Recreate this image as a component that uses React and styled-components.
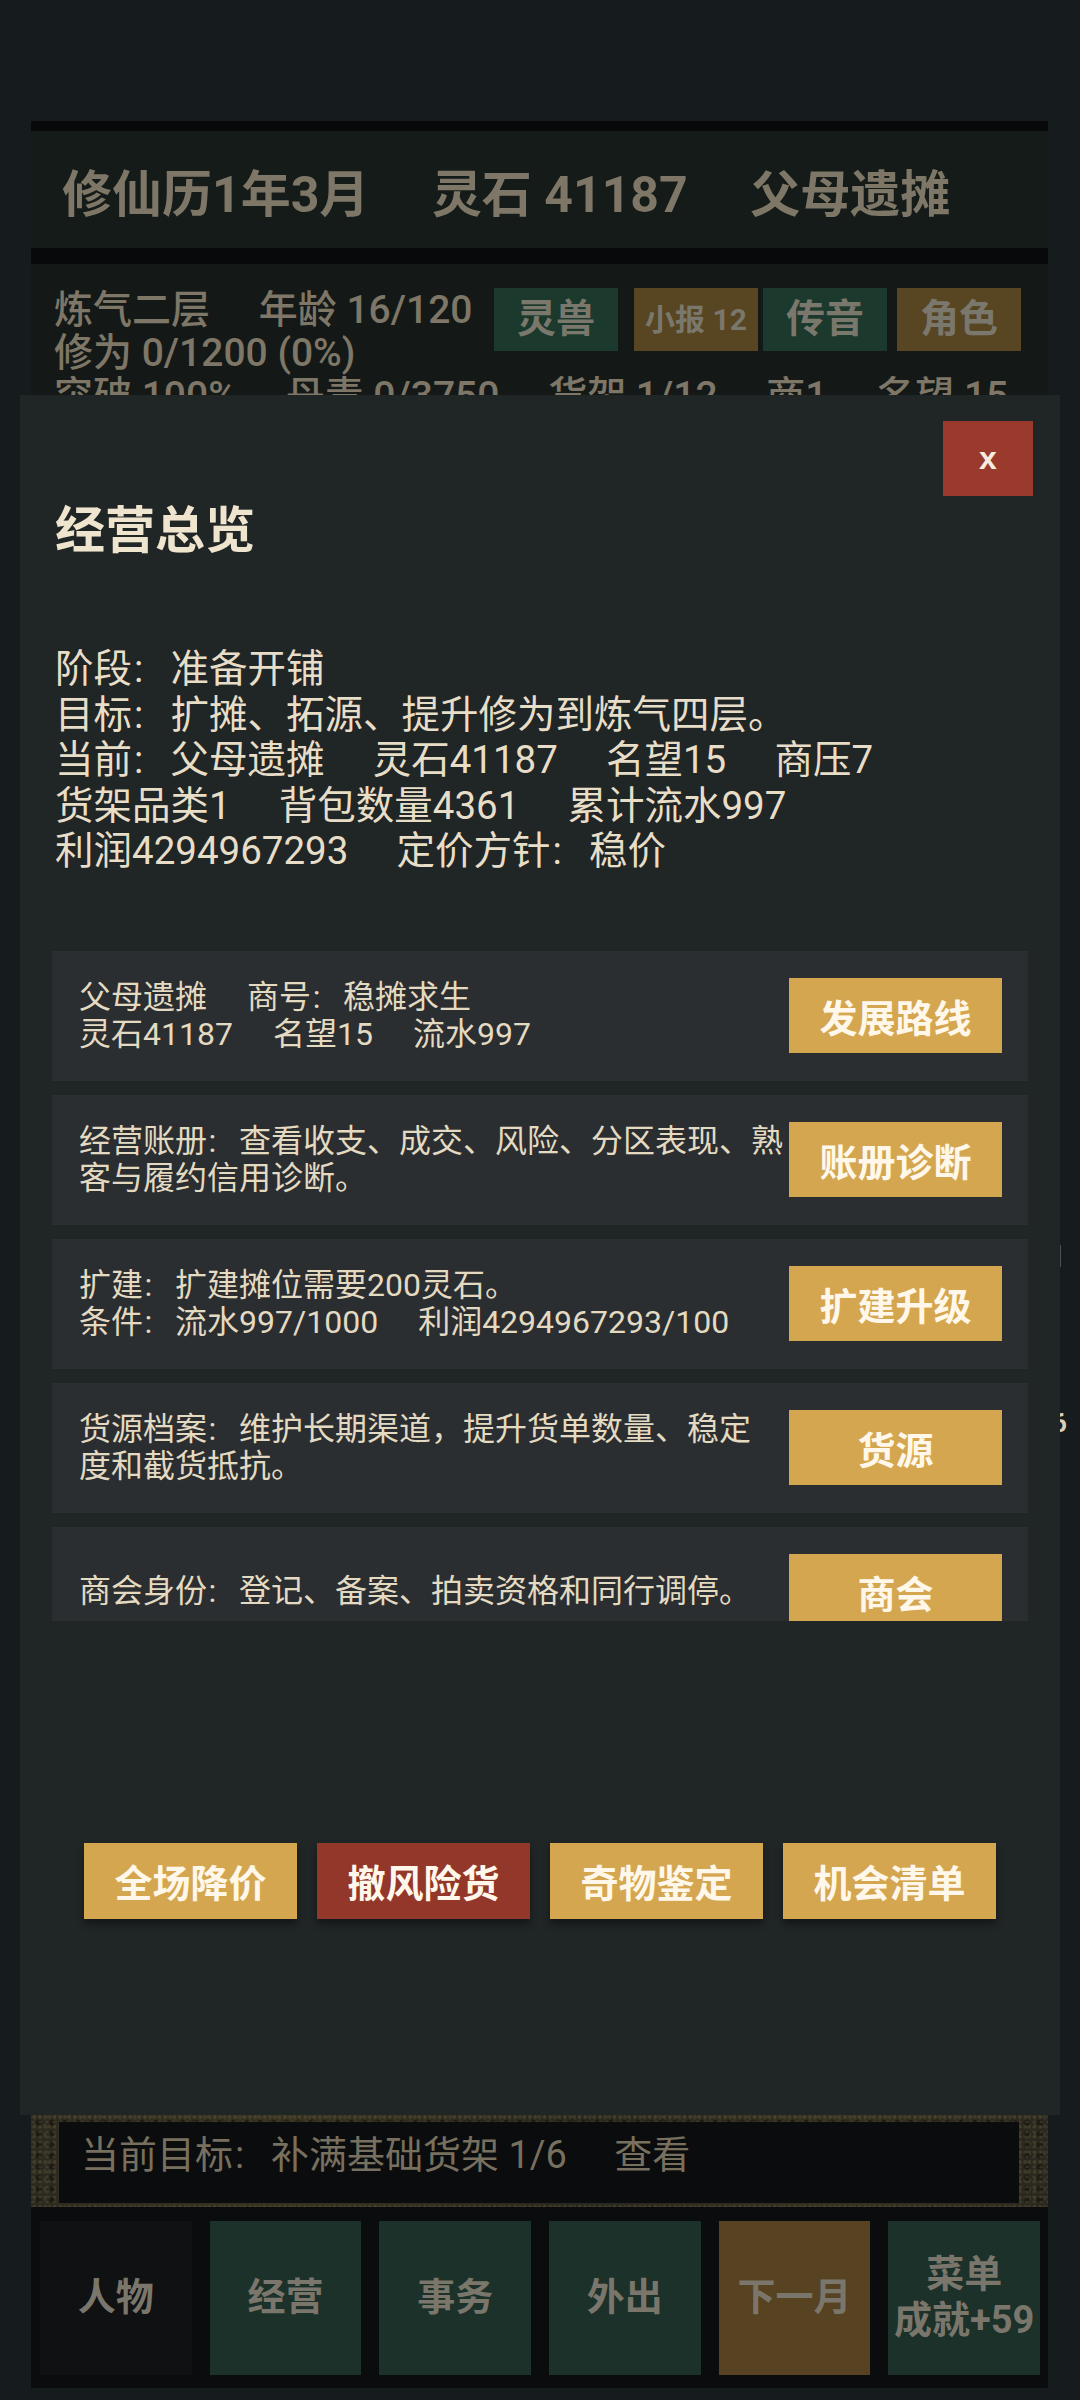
import React from "react";
import styled, { createGlobalStyle } from "styled-components";

const FONT = `Roboto, "Noto Sans CJK SC", "Noto Sans", sans-serif`;

const Global = createGlobalStyle`
  html, body { margin: 0; padding: 0; background: #161b1d; }
  body { font-family: ${FONT}; }
  * { box-sizing: border-box; }
`;

const Screen = styled.div`
  position: relative;
  width: 1080px;
  height: 2400px;
  overflow: hidden;
  background: #161b1d;
  display: flex;
  flex-direction: column;
  padding: 121px 32px 12px 31px;
`;

const BlackBar = styled.div`
  height: ${(p) => p.$h}px;
  background: #07090b;
  flex-shrink: 0;
`;

const Header = styled.div`
  height: 117px;
  flex-shrink: 0;
  background: #141b18;
  display: flex;
  align-items: center;
  padding-left: 31px;
  font-size: 50px;
  font-weight: 700;
  color: #7e7666;
  white-space: nowrap;
`;

const Sep = styled.span`
  display: inline-block;
  width: ${(p) => p.$w || "1.25em"};
`;

/* CJK-style colon: dots sit just after the previous glyph, full em advance */
const ColonMark = styled.span`
  display: inline-block;
  width: 1em;
  padding-left: 0.05em;
  text-align: left;
`;

const StatusPanel = styled.div`
  flex: 1;
  background: #141917;
  padding: 25px 27px 0 23px;
  color: #7e7666;
  font-size: 39px;
  font-weight: 500;
  line-height: 43px;
`;

const StatusRow = styled.div`
  display: flex;
  align-items: flex-start;
  justify-content: space-between;
`;

const StatLine = styled.div`
  white-space: nowrap;
`;

const Chips = styled.div`
  display: flex;
  margin-top: -1px;
`;

const Chip = styled.div`
  width: 124px;
  height: 63px;
  margin-left: ${(p) => p.$ml || 0}px;
  background: ${(p) => (p.$tone === "brown" ? "#584522" : "#1c392d")};
  color: #7a776c;
  display: flex;
  align-items: center;
  justify-content: center;
  font-size: ${(p) => p.$fs || 39}px;
  font-weight: 700;
  white-space: nowrap;
`;

const GoalFrame = styled.div`
  height: 92px;
  flex-shrink: 0;
  padding: 7px 29px 4px 28px;
  background-color: #2a281f;
  background-image:
    radial-gradient(ellipse at 30% 40%, rgba(78, 70, 48, 0.55) 0 1px, transparent 3px),
    radial-gradient(ellipse at 60% 70%, rgba(14, 13, 9, 0.6) 0 2px, transparent 4px),
    radial-gradient(ellipse at 80% 20%, rgba(95, 86, 60, 0.35) 0 1px, transparent 2px),
    linear-gradient(90deg, #2c2a20, #35311f 25%, #28271e 55%, #33301f 80%, #2a281f);
  background-size: 7px 5px, 13px 11px, 5px 9px, 100% 100%;
`;

const GoalBox = styled.div`
  height: 100%;
  background: #0a0c0d;
  padding: 11px 22px 0;
  font-size: 38px;
  line-height: 1.2;
  color: #77705f;
  white-space: nowrap;
`;

const Nav = styled.div`
  height: 181px;
  flex-shrink: 0;
  background: #0a0c0d;
  padding: 14px 8px 13px 9px;
  display: grid;
  grid-template-columns: repeat(6, 1fr);
  column-gap: 18px;
`;

const NavBtn = styled.div`
  background: ${(p) =>
    p.$tone === "dark" ? "#0f1112" : p.$tone === "brown" ? "#574321" : "#1b3129"};
  color: #7a766c;
  font-size: 38px;
  font-weight: 700;
  line-height: 1.2;
  display: flex;
  flex-direction: column;
  align-items: center;
  justify-content: center;
  text-align: center;
  white-space: nowrap;
`;

const PeekBadge = styled.div`
  position: absolute;
  left: 1052px;
  top: 1408px;
  font-size: 26px;
  font-weight: 700;
  color: #d8d0bb;
`;

const PeekTick = styled.div`
  position: absolute;
  left: 1059px;
  top: 1245px;
  width: 2px;
  height: 22px;
  background: #4a4f52;
`;

/* Modal */
const Modal = styled.div`
  position: absolute;
  left: 20px;
  top: 395px;
  width: 1040px;
  height: 1720px;
  background: #202526;
  display: flex;
  flex-direction: column;
  padding: 0 32px;
  z-index: 2;
`;

const CloseRow = styled.div`
  display: flex;
  justify-content: flex-end;
  padding-top: 26px;
  margin-right: -5px;
`;

const CloseBtn = styled.div`
  width: 90px;
  height: 75px;
  background: #9a3a2d;
  color: #f6ece0;
  font-family: "Liberation Sans", Roboto, sans-serif;
  font-size: 32px;
  font-weight: 700;
  display: flex;
  align-items: center;
  justify-content: center;
`;

const Title = styled.div`
  margin-top: 5px;
  padding-left: 3px;
  font-size: 50px;
  font-weight: 700;
  line-height: 1.2;
  color: #efe5cf;
`;

const Info = styled.div`
  margin-top: 85px;
  padding-left: 3px;
  font-size: 38.5px;
  line-height: 45.6px;
  color: #e8dec8;
`;

const InfoLine = styled.div`
  white-space: nowrap;
`;

const CardList = styled.div`
  margin-top: 77px;
  height: 670px;
  overflow: hidden;
  display: flex;
  flex-direction: column;
  gap: 14px;
`;

const Card = styled.div`
  flex-shrink: 0;
  height: 130px;
  background: #2a2e30;
  display: flex;
  align-items: center;
  justify-content: space-between;
  gap: 6px;
  padding: 0 26px 0 27px;
`;

const CardText = styled.div`
  min-width: 0;
  font-size: 32px;
  line-height: 37px;
  color: #e4dac2;
`;

const CardLine = styled.div`
  white-space: nowrap;
`;

const GoldBtn = styled.div`
  flex-shrink: 0;
  width: ${(p) => p.$w || 213}px;
  height: ${(p) => p.$h || 75}px;
  background: ${(p) => (p.$danger ? "#92372a" : "#d4a650")};
  color: #fff8ea;
  font-size: 38px;
  font-weight: 700;
  display: flex;
  align-items: center;
  justify-content: center;
  white-space: nowrap;
  box-shadow: ${(p) => (p.$shadow ? "0 5px 7px rgba(0,0,0,0.38)" : "none")};
`;

const ActionRow = styled.div`
  margin-top: 222px;
  display: flex;
  justify-content: center;
  gap: 20px;
`;

/* render a string, turning every "：" into the left-set colon mark */
const T = ({ s }) => {
  const parts = s.split("：");
  return parts.map((p, i) => (
    <React.Fragment key={i}>
      {i > 0 && <ColonMark>:</ColonMark>}
      {p}
    </React.Fragment>
  ));
};

const joinSeg = (segs) =>
  segs.map((s, i) => (
    <React.Fragment key={i}>
      {i > 0 && <Sep />}
      <T s={s} />
    </React.Fragment>
  ));

const cards = [
  {
    lines: [
      ["父母遗摊", "商号：稳摊求生"],
      ["灵石41187", "名望15", "流水997"],
    ],
    btn: "发展路线",
  },
  {
    lines: [["经营账册：查看收支、成交、风险、分区表现、熟"], ["客与履约信用诊断。"]],
    btn: "账册诊断",
  },
  {
    lines: [["扩建：扩建摊位需要200灵石。"], ["条件：流水997/1000", "利润4294967293/100"]],
    btn: "扩建升级",
  },
  {
    lines: [["货源档案：维护长期渠道，提升货单数量、稳定"], ["度和截货抵抗。"]],
    btn: "货源",
  },
  { lines: [["商会身份：登记、备案、拍卖资格和同行调停。"]], btn: "商会" },
];

export default function App() {
  return (
    <>
      <Global />
      <Screen>
        <BlackBar $h={10} />
        <Header>{joinSeg(["修仙历1年3月", "灵石 41187", "父母遗摊"])}</Header>
        <BlackBar $h={16} />
        <StatusPanel>
          <StatusRow>
            <div>
              <StatLine>{joinSeg(["炼气二层", "年龄 16/120"])}</StatLine>
              <StatLine>修为 0/1200 (0%)</StatLine>
            </div>
            <Chips>
              <Chip>灵兽</Chip>
              <Chip $tone="brown" $ml={16} $fs={30}>
                小报 12
              </Chip>
              <Chip $ml={5}>传音</Chip>
              <Chip $tone="brown" $ml={10}>
                角色
              </Chip>
            </Chips>
          </StatusRow>
          <StatLine>{joinSeg(["突破 100%", "丹毒 0/3750", "货架 1/12", "商1", "名望 15"])}</StatLine>
        </StatusPanel>
        <GoalFrame>
          <GoalBox>{joinSeg(["当前目标：补满基础货架 1/6", "查看"])}</GoalBox>
        </GoalFrame>
        <Nav>
          <NavBtn $tone="dark">人物</NavBtn>
          <NavBtn>经营</NavBtn>
          <NavBtn>事务</NavBtn>
          <NavBtn>外出</NavBtn>
          <NavBtn $tone="brown">下一月</NavBtn>
          <NavBtn>
            <span>菜单</span>
            <span>成就+59</span>
          </NavBtn>
        </Nav>

        <PeekTick />
        <PeekBadge>6</PeekBadge>

        <Modal>
          <CloseRow>
            <CloseBtn>x</CloseBtn>
          </CloseRow>
          <Title>经营总览</Title>
          <Info>
            <InfoLine>{joinSeg(["阶段：准备开铺"])}</InfoLine>
            <InfoLine>{joinSeg(["目标：扩摊、拓源、提升修为到炼气四层。"])}</InfoLine>
            <InfoLine>{joinSeg(["当前：父母遗摊", "灵石41187", "名望15", "商压7"])}</InfoLine>
            <InfoLine>{joinSeg(["货架品类1", "背包数量4361", "累计流水997"])}</InfoLine>
            <InfoLine>{joinSeg(["利润4294967293", "定价方针：稳价"])}</InfoLine>
          </Info>
          <CardList>
            {cards.map((c, i) => (
              <Card key={i}>
                <CardText>
                  {c.lines.map((l, j) => (
                    <CardLine key={j}>{joinSeg(l)}</CardLine>
                  ))}
                </CardText>
                <GoldBtn>{c.btn}</GoldBtn>
              </Card>
            ))}
          </CardList>
          <ActionRow>
            <GoldBtn $h={76} $shadow>全场降价</GoldBtn>
            <GoldBtn $h={76} $shadow $danger>
              撤风险货
            </GoldBtn>
            <GoldBtn $h={76} $shadow>奇物鉴定</GoldBtn>
            <GoldBtn $h={76} $shadow>机会清单</GoldBtn>
          </ActionRow>
        </Modal>
      </Screen>
    </>
  );
}
